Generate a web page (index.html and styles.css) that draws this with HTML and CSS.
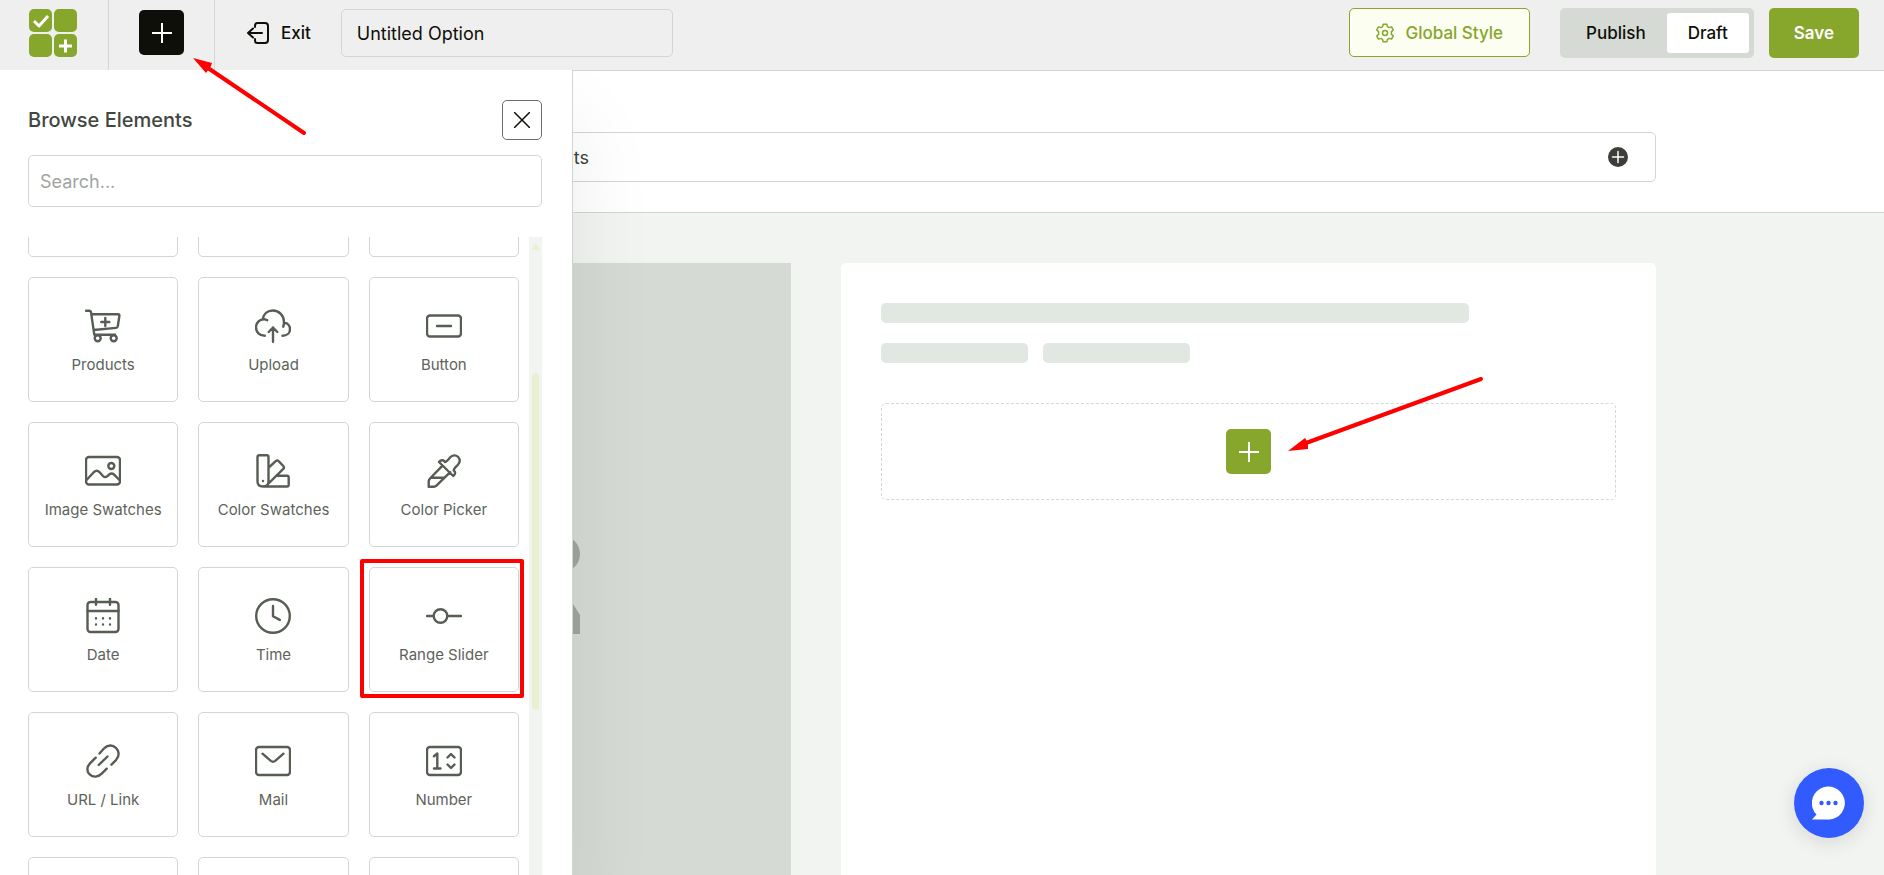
FILE: index.html
```html
<!DOCTYPE html>
<html lang="en">
<head>
<meta charset="utf-8">
<title>Option Builder</title>
<link rel="stylesheet" href="styles.css">
</head>
<body>
<div class="app">
  <header class="topbar">
    <div class="logo-cell">
      <svg class="logo" viewBox="0 0 48 48" role="img" aria-label="Logo">
        <rect x="0" y="0" width="23" height="23" rx="5"/><rect x="25" y="0" width="23" height="23" rx="5"/>
        <rect x="0" y="25" width="23" height="23" rx="5"/><rect x="25" y="25" width="23" height="23" rx="5"/>
        <path class="logo-mark" d="M5 12l5 5 9-10M36.500 30.500v13M30 37h13"/>
      </svg>
    </div>
    <div class="add-cell">
      <button class="add-btn dark" aria-label="Add element"><svg viewBox="0 0 20 20"><path d="M10 0v20M0 10h20"/></svg></button>
    </div>
    <a class="exit" href="#">
      <svg viewBox="0 0 22 22"><path d="M8 5V3.500Q8 1 10.500 1h7.500Q21 1 21 4v14q0 3-3 3h-7.500Q8 21 8 18.500V17M15 11H1M6 6.500L1 11l5 4.500"/></svg>
      <span>Exit</span>
    </a>
    <input class="title-input" type="text" value="Untitled Option" aria-label="Option title">
    <div class="actions">
      <button class="global-style">
        <svg viewBox="0 0 18 20"><path d="M7.200 1.200h3.600l.7 2.500 1.500.9 2.500-.7 1.700 3-1.800 1.900v2.400l1.800 1.900-1.700 3-2.500-.7-1.500.9-.7 2.500H7.200l-.7-2.500-1.500-.9-2.500.7-1.700-3 1.800-1.900V8.800L.8 6.900l1.700-3 2.500.7 1.500-.9z"/><circle cx="9" cy="10" r="2.500"/></svg>
        <span>Global Style</span>
      </button>
      <div class="status">
        <button class="status-btn">Publish</button>
        <button class="status-btn active">Draft</button>
      </div>
      <button class="save">Save</button>
    </div>
  </header>

  <main class="workspace">
    <section class="assign">
      <div class="assign-box">
        <span class="assign-label">Assign to Specific Products</span>
        <button class="assign-add" aria-label="Add products"><svg viewBox="0 0 20 20"><circle cx="10" cy="10" r="10"/><path d="M10 4.500v11M4.500 10h11"/></svg></button>
      </div>
    </section>
    <section class="preview">
      <div class="image-holder">
        <svg viewBox="0 0 142 104"><circle cx="123" cy="24" r="18"/><path d="M0 104V64l44-50 56 62 19-13h8l14 22v19z" /></svg>
      </div>
      <div class="product">
        <div class="bar long"></div>
        <div class="bar-row"><div class="bar"></div><div class="bar"></div></div>
        <div class="dropzone">
          <button class="add-btn" aria-label="Add element here"><svg viewBox="0 0 20 20"><path d="M10 0v20M0 10h20"/></svg></button>
        </div>
      </div>
    </section>
  </main>

  <aside class="panel">
    <div class="panel-head">
      <h2>Browse Elements</h2>
      <button class="close" aria-label="Close"><svg viewBox="0 0 16 16"><path d="M0.500 0.500l15 15M15.500 0.500l-15 15"/></svg></button>
    </div>
    <input class="search" type="text" placeholder="Search..." aria-label="Search elements">
    <div class="list">
      <div class="grid">
        <button class="card" aria-label="Element"></button><button class="card" aria-label="Element"></button><button class="card" aria-label="Element"></button>
        <button class="card"><svg viewBox="0 0 36 36"><path d="M1 2.700h3.500q1.300 0 1.500 1.500l3.300 22.500H30M6.500 6.200H33q1.600 0 1.400 1.600l-1.600 10.500q-.3 1.500-1.800 1.600L8.500 22M20.300 10v8M16.300 14h8"/><circle cx="12.700" cy="30.300" r="3"/><circle cx="28.700" cy="30.300" r="3"/></svg><span>Products</span></button>
        <button class="card"><svg viewBox="0 0 36 36"><path d="M9.800 27.700C4.500 27.700 1 24 1 19.500c0-5 4-8.500 8-8.300l3.200 1M7.500 11.500C8.500 6 12.500 2.500 17.700 2.500c6.500 0 11.300 5 11.300 11.500 0 2-.2 3.300-.8 4.700M29 14.500c3.500.5 6 3.200 6 6.700 0 4-3.300 6.500-7.500 6.500M18 33.700V19.500M13.700 24l4.300-4.500L22.300 24"/></svg><span>Upload</span></button>
        <button class="card"><svg viewBox="0 0 36 36"><rect x="1" y="7.500" width="34" height="21" rx="3"/><path d="M11 18h14"/></svg><span>Button</span></button>

        <button class="card"><svg viewBox="0 0 36 36"><rect x="1" y="4" width="34" height="27.500" rx="3"/><circle cx="26.300" cy="13" r="3"/><path d="M1.500 27l7.500-8q2.700-2.500 5.400 0l3.600 4q2.200 2.300 4.500 0l1.900-1.700q2.200-1.800 4.400 0l6.200 6.200"/></svg><span>Image Swatches</span></button>
        <button class="card"><svg viewBox="0 0 36 36"><path d="M4.300 2.300h7.500q1.700 0 1.700 1.700v24.500q0 5-5.500 5-5.500 0-5.500-5V4q0-1.700 1.800-1.700zM13.700 14.700l7-6.600q1.500-1.300 2.900 0l4.700 4.900q1.300 1.500 0 2.900L11.500 32.500M22.300 22.700h9.700q1.700 0 1.700 1.700v7.400q0 1.700-1.700 1.700H8"/><path d="M8 28v.1"/></svg><span>Color Swatches</span></button>
        <button class="card"><svg viewBox="0 0 36 36"><path d="M16.500 12.700L4 25.500q-1.300 1.500-1.300 3v5.200h5q1.700 0 3-1.300l13.500-13.200M6 24.700h12.500M13 9c2-2.500 4.500-2.200 6 0 1.500-.2 3.500-2.500 5-4.500 2.500-2.700 6-2.700 8.200-.5 2.200 2.300 1.800 5.500-.5 8-2.200 2-4.200 3.800-4 5.500 2 1.200 2 3.700-.5 5.500z"/></svg><span>Color Picker</span></button>

        <button class="card"><svg viewBox="0 0 36 36"><rect x="2.500" y="4" width="31" height="30" rx="3"/><path d="M2.500 13h31M11 .8v6M25 .8v6M11 20.300v.1M18 20.300v.1M25 20.300v.1M11 26.500v.1M18 26.500v.1M25 26.500v.1"/></svg><span>Date</span></button>
        <button class="card"><svg viewBox="0 0 36 36"><circle cx="18" cy="18" r="16.800"/><path d="M18 8v10.300l6.800 3.600"/></svg><span>Time</span></button>
        <button class="card marked"><svg viewBox="0 0 36 36"><circle cx="14.500" cy="18" r="6.800"/><path d="M1 18h6.700M21.300 18H35"/></svg><span>Range Slider</span></button>

        <button class="card"><svg viewBox="0 0 36 36"><path d="M14.500 10.500l4.200-4.700c4-4.300 9-4 12.200-1 3.500 3.300 3.700 8.200.3 12l-4.700 4.900M10.700 14.700l-5.500 5.500c-3.800 4-3.500 8.500-.5 11.200 3.300 3.200 8.300 3 12-.7l5-5M13.700 22l8.800-8.500"/></svg><span>URL / Link</span></button>
        <button class="card"><svg viewBox="0 0 36 36"><rect x="1" y="4" width="34" height="28" rx="3"/><path d="M7.500 10.700l8.300 7.200q2.200 1.700 4.400 0l8.300-7.200"/></svg><span>Mail</span></button>
        <button class="card"><svg viewBox="0 0 36 36"><rect x="1" y="4" width="34" height="28" rx="3"/><path d="M8 13.200l3.300-2.700v15M8 25.500h6.500M21.500 14.500l3.500-3.500 3.500 3.500M21.500 21.500l3.500 3.500 3.500-3.500"/></svg><span>Number</span></button>

        <button class="card" aria-label="Element"></button><button class="card" aria-label="Element"></button><button class="card" aria-label="Element"></button>
      </div>
      <div class="track"><div class="track-up"></div><div class="thumb"></div></div>
    </div>
  </aside>

  <svg class="arrow arrow-top" viewBox="0 0 114 78"><path class="shaft" d="M112 76L16 11"/><path class="head" d="M1 1l19 5-1 3-5 7z"/></svg>
  <svg class="arrow arrow-drop" viewBox="0 0 196 76"><path class="shaft" d="M193 3L18 67"/><path class="head" d="M0 75L17 62l3 5v6z"/></svg>

  <button class="chat" aria-label="Open chat"><svg viewBox="0 0 34 34"><path d="M0 33.500l4.500-5A16.500 16.500 0 1 1 17 33.500z"/><g><circle cx="9.500" cy="17" r="2.200"/><circle cx="16.500" cy="17" r="2.200"/><circle cx="23.500" cy="17" r="2.200"/></g></svg></button>
</div>
</body>
</html>
```

FILE: styles.css
```css
* { box-sizing: border-box; }

body {
  margin: 0;
  font-family: Inter, "Liberation Sans", sans-serif;
  color: #0e0f08;
  background: #f2f4f1;
  overflow: hidden;
}

button, input { font: inherit; color: inherit; margin: 0; }
button { cursor: pointer; padding: 0; border: 0; background: none; }
svg { display: block; fill: none; stroke: currentColor; stroke-width: 2; stroke-linecap: round; stroke-linejoin: round; }

.app {
  position: relative;
  display: flex;
  flex-direction: column;
  height: 100vh;
  overflow: hidden;
}

/* Top bar */
.topbar {
  display: flex;
  flex: none;
  height: 71px;
  padding-right: 25px;
  background: #efefef;
  border-bottom: 1px solid #d2d6d1;
  font-size: 18px;
}
.logo-cell, .add-cell { display: flex; border-right: 1px solid #d2d6d1; }
.logo-cell { padding: 9px 31px 0 29px; }
.add-cell { padding: 10px 30px 0; }
.logo { width: 48px; height: 48px; fill: #86a62c; stroke: none; }
.logo-mark { fill: none; stroke: #fff; stroke-width: 3; stroke-linecap: butt; }
.add-btn {
  display: flex;
  align-items: center;
  justify-content: center;
  width: 45px;
  height: 45px;
  border-radius: 5px;
  color: #fff;
  background: #86a62c;
}
.add-btn.dark { background: #0e0f08; }
.add-btn svg { width: 20px; height: 20px; }
.exit {
  display: flex;
  align-items: center;
  gap: 12px;
  height: 65px;
  margin-left: 32px;
  color: inherit;
  font-size: 17px;
  font-weight: 500;
  text-decoration: none;
}
.exit svg { width: 22px; height: 22px; }
.title-input {
  width: 332px;
  height: 48px;
  margin: 9px 0 0 30px;
  padding: 0 15px;
  border: 1px solid #d2d6d1;
  border-radius: 5px;
  background: transparent;
}
.actions {
  display: flex;
  align-items: flex-start;
  margin-left: auto;
  padding-top: 8px;
  font-size: 17px;
  font-weight: 500;
}
.global-style {
  display: flex;
  align-items: center;
  gap: 11px;
  height: 49px;
  padding: 0 26px;
  margin-right: 30px;
  color: #86a62c;
  background: #fbfef0;
  border: 1px solid #86a62c;
  border-radius: 5px;
}
.global-style svg { width: 18px; height: 20px; stroke-width: 1.500; }
.status {
  display: flex;
  height: 50px;
  padding: 5px;
  margin-right: 15px;
  background: #d5dad4;
  border-radius: 5px;
}
.status-btn { padding: 0 21px; border-radius: 3px; }
.status-btn.active { background: #fff; }
.save {
  height: 50px;
  padding: 0 25px;
  color: #fff;
  background: #86a62c;
  border-radius: 5px;
  font-weight: 600;
}

/* Workspace */
.workspace { flex: 1; min-height: 0; }
.assign {
  padding: 61px 228px 30px;
  background: #fff;
  border-bottom: 1px solid #d2d6d1;
}
.assign-box {
  display: flex;
  align-items: center;
  justify-content: space-between;
  height: 50px;
  padding: 0 27px 0 0;
  border: 1px solid #d2d6d1;
  border-radius: 5px;
}
.assign-label { width: 360px; color: #3b3f37; font-size: 18px; text-align: right; }
.assign-add svg { width: 20px; height: 20px; fill: #3b3f37; stroke: none; }
.assign-add path { stroke: #fff; stroke-width: 1.500; }
.preview {
  display: grid;
  grid-template-columns: 563fr 815fr;
  gap: 50px;
  padding: 50px 228px 0;
}
.image-holder {
  display: flex;
  align-items: center;
  justify-content: center;
  height: 638px;
  background: #d5dad4;
}
.image-holder svg { width: 142px; height: 104px; fill: #a0a59f; stroke: none; }
.product { padding: 40px; background: #fff; border-radius: 5px; }
.bar { width: 20%; height: 20px; background: #e1e8e1; border-radius: 5px; }
.bar.long { width: 80%; }
.bar-row { display: flex; gap: 15px; margin: 20px 0 40px; }
.dropzone {
  display: flex;
  align-items: center;
  justify-content: center;
  height: 97px;
  border: 1px dashed #d5d7d4;
  border-radius: 5px;
}

/* Element browser, over the workspace */
.panel {
  position: absolute;
  top: 70px;
  left: 0;
  bottom: 0;
  display: flex;
  flex-direction: column;
  width: 573px;
  padding: 30px 30px 0 28px;
  background: #fff;
  border-right: 1px solid #d2d6d1;
  box-shadow: 0 50px 80px rgba(14, 15, 8, 0.08);
  clip-path: inset(0 -120px 0 0);
}
.panel-head { display: flex; align-items: center; justify-content: space-between; }
.panel-head h2 { margin: 0; color: #42473f; font-size: 20px; font-weight: 500; }
.close {
  display: flex;
  align-items: center;
  justify-content: center;
  width: 40px;
  height: 40px;
  border: 1px solid #6b6f68;
  border-radius: 5px;
}
.close svg { width: 16px; height: 16px; stroke-width: 1.500; }
.search {
  width: 100%;
  height: 52px;
  margin: 15px 0 30px;
  padding: 0 11px;
  flex: none;
  border: 1px solid #d2d6d1;
  border-radius: 5px;
  background: #fff;
  font-size: 18px;
}
.search::placeholder { color: #a0a59f; opacity: 1; }
.list { display: flex; gap: 10px; flex: 1; min-height: 0; overflow: hidden; }
.grid {
  display: grid;
  grid-template-columns: repeat(3, 1fr);
  grid-auto-rows: 125px;
  gap: 20px;
  flex: 1;
  margin-top: -105px;
}
.card {
  position: relative;
  display: flex;
  flex-direction: column;
  align-items: center;
  gap: 11px;
  padding-top: 30px;
  border: 1px solid #d2d6d1;
  border-radius: 5px;
  color: #5c6459;
  font-size: 15px;
  line-height: 20px;
}
.card svg { width: 36px; height: 36px; stroke: #565e53; stroke-width: 2.400; }
.card.marked::after {
  content: "";
  position: absolute;
  inset: -9px -6px -7px -10px;
  border: 4px solid #f00;
  border-radius: 2px;
}
.track { width: 13px; padding: 6px 2px 0; background: #f2f4f1; }
.track-up {
  height: 7px;
  background: #e9f0d2;
  clip-path: polygon(50% 0, 100% 100%, 0 100%);
}
.thumb { width: 7px; height: 337px; margin: 123px auto 0; background: #e9f0d2; border-radius: 4px; }

/* Callout arrows */
.arrow { position: absolute; pointer-events: none; }
.arrow .shaft { stroke: #f00; stroke-width: 4; }
.arrow .head { fill: #f00; stroke: none; }
.arrow-top { top: 57px; left: 192px; width: 114px; height: 78px; }
.arrow-drop { top: 376px; left: 1288px; width: 196px; height: 76px; }

.chat {
  position: absolute;
  right: 20px;
  bottom: 37px;
  display: flex;
  align-items: center;
  justify-content: center;
  width: 70px;
  height: 70px;
  border-radius: 50%;
  background: #325bff;
  box-shadow: 0 4px 20px rgba(14, 15, 8, 0.12);
}
.chat svg { width: 34px; height: 34px; fill: #fff; stroke: none; }
.chat g { fill: #325bff; }
```
